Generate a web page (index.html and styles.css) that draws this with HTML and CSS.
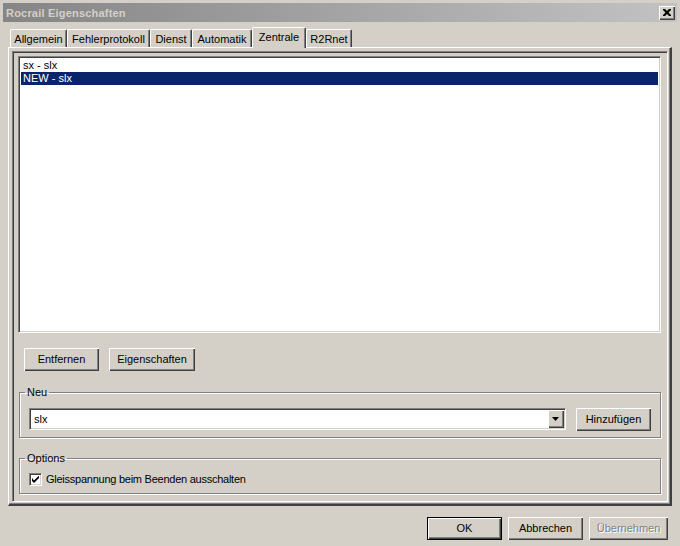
FILE: index.html
```html
<!DOCTYPE html>
<html>
<head>
<meta charset="utf-8">
<link rel="stylesheet" href="styles.css">
</head>
<body>
<div class="titlebar">
  <span class="title">Rocrail Eigenschaften</span>
  <span class="close"><svg width="8" height="7" viewBox="0 0 8 7"><path d="M0 0h2l2 2 2-2h2v1l-2.5 2.5 2.5 2.5v1h-2l-2-2-2 2h-2v-1l2.5-2.5-2.5-2.5z" fill="#000"/></svg></span>
</div>
<div class="tabs">
  <div class="tab t-allg">Allgemein</div>
  <div class="tab t-fehl">Fehlerprotokoll</div>
  <div class="tab t-dien">Dienst</div>
  <div class="tab t-auto">Automatik</div>
  <div class="tab t-zent active">Zentrale</div>
  <div class="tab t-r2r">R2Rnet</div>
</div>
<div class="panel">
  <div class="sunken">
    <div class="list">
      <div class="item">sx - slx</div>
      <div class="item sel">NEW - slx</div>
    </div>
    <div class="btnrow">
      <button class="btn b-entf">Entfernen</button>
      <button class="btn b-eig">Eigenschaften</button>
    </div>
    <fieldset class="group g-neu">
      <legend>Neu</legend>
      <div class="neurow">
        <div class="combo">
          <span class="combotext">slx</span>
          <span class="dropbtn"><svg width="7" height="4" viewBox="0 0 7 4"><path d="M0 0h7l-3.5 4z" fill="#000"/></svg></span>
        </div>
        <button class="btn b-add">Hinzufügen</button>
      </div>
    </fieldset>
    <fieldset class="group g-opt">
      <legend>Options</legend>
      <label class="check">
        <span class="box"><svg width="7" height="7" viewBox="0 0 7 7"><path d="M0 2v3l2 2 5-5v-2.5l-5 5z" fill="#000"/></svg></span>
        <span class="checklabel">Gleisspannung beim Beenden ausschalten</span>
      </label>
    </fieldset>
  </div>
</div>
<div class="footer">
  <button class="btn b-foot default">OK</button>
  <button class="btn b-foot">Abbrechen</button>
  <button class="btn b-foot b-wide disabled">Übernehmen</button>
</div>
</body>
</html>
```

FILE: styles.css
```css
html, body {
  margin: 0;
  padding: 0;
}
body {
  width: 680px;
  height: 546px;
  background: #d4d0c8;
  font-family: "Liberation Sans", Arial, sans-serif;
  font-size: 11px;
  color: #000;
  overflow: hidden;
}
.titlebar {
  margin: 3px 3px 0 3px;
  height: 19px;
  background: linear-gradient(to right, #858585, #c2c2c2);
  display: flex;
  align-items: center;
  justify-content: space-between;
  padding: 0 2px 0 3px;
}
.title {
  font-weight: bold;
  color: #d4d0c8;
  font-size: 11px;
  letter-spacing: 0.2px;
}
.close {
  width: 16px;
  height: 14px;
  box-sizing: border-box;
  background: #d4d0c8;
  box-shadow: inset 1px 1px #fff, inset -1px -1px #404040, inset -2px -2px #808080;
  display: flex;
  align-items: center;
  justify-content: center;
}
.close svg { display: block; margin-top: -1px; }

.tabs {
  display: flex;
  align-items: flex-end;
  margin-top: 5px;
  padding-left: 10px;
  height: 21px;
}
.tab {
  box-sizing: border-box;
  height: 18px;
  margin-bottom: 1px;
  border-top: 1px solid #fff;
  border-left: 1px solid #fff;
  border-right: 1px solid #404040;
  border-radius: 2px 2px 0 0;
  box-shadow: inset -1px 0 #808080;
  text-align: center;
  padding-top: 3px;
  line-height: 13px;
  white-space: nowrap;
}
.tab.active {
  height: 21px;
  margin-bottom: 0;
  padding-top: 3px;
  background: #d4d0c8;
  position: relative;
  z-index: 1;
}
.t-allg { width: 57px; }
.t-fehl { width: 83px; }
.t-dien { width: 42px; }
.t-auto { width: 60px; }
.t-zent { width: 54px; }
.t-r2r { width: 46px; }

.panel {
  margin: -1px 0 0 8px;
  width: 664px;
  height: 459px;
  box-sizing: border-box;
  border-top: 1px solid #fff;
  border-left: 1px solid #fff;
  border-right: 2px solid #404040;
  border-bottom: 2px solid #404040;
  box-shadow: inset -1px -1px #808080;
  padding: 3px 2px 2px 3px;
}
.sunken {
  height: 451px;
  box-sizing: border-box;
  border: 1px solid;
  border-color: #808080 #fff #fff #808080;
  box-shadow: inset 1px 1px #404040;
  padding: 1px;
  display: flex;
  flex-direction: column;
}
.list {
  margin: 3px 5px 0 4px;
  height: 277px;
  box-sizing: border-box;
  background: #fff;
  border: 1px solid;
  border-color: #808080 #fff #fff #808080;
  box-shadow: inset 1px 1px #404040, inset -1px -1px #d4d0c8;
  padding: 2px;
}
.item {
  height: 13px;
  line-height: 13px;
  padding-left: 2px;
  white-space: nowrap;
}
.item.sel {
  background: #0a246a;
  color: #fff;
}

.btn {
  font-family: "Liberation Sans", Arial, sans-serif;
  font-size: 11px;
  color: #000;
  background: #d4d0c8;
  border: none;
  margin: 0;
  padding: 0;
  height: 23px;
  box-sizing: border-box;
  box-shadow: inset 1px 1px #fff, inset -1px -1px #404040, inset -2px -2px #808080;
  text-align: center;
  line-height: 21px;
}
.btnrow {
  display: flex;
  gap: 10px;
  margin: 15px 0 0 10px;
}
.b-entf { width: 75px; }
.b-eig { width: 86px; }

.group {
  margin: 0;
  border: 1px solid #808080;
  box-shadow: inset 1px 1px #fff, 1px 1px #fff;
  min-width: 0;
}
.group legend {
  padding: 0 2px;
  margin-left: -4px;
  line-height: 13px;
  height: 13px;
}
.g-neu {
  margin: 15px 5px 0 5px;
  padding: 9px 9px 6px 9px;
}
.neurow {
  display: flex;
  gap: 10px;
  align-items: flex-start;
}
.combo {
  width: 537px;
  height: 22px;
  box-sizing: border-box;
  background: #fff;
  border: 1px solid;
  border-color: #808080 #fff #fff #808080;
  box-shadow: inset 1px 1px #404040, inset -1px -1px #d4d0c8;
  padding: 1px;
  display: flex;
  align-items: stretch;
}
.combotext {
  flex: 1;
  line-height: 18px;
  padding-left: 3px;
}
.dropbtn {
  width: 16px;
  box-sizing: border-box;
  background: #d4d0c8;
  box-shadow: inset 1px 1px #fff, inset -1px -1px #404040, inset -2px -2px #808080;
  display: flex;
  align-items: center;
  justify-content: center;
}
.dropbtn svg { display: block; margin-left: -1px; }
.b-add { width: 75px; }

.g-opt {
  margin: 14px 5px 0 5px;
  padding: 8px 9px 7px 9px;
}
.check {
  display: flex;
  align-items: center;
  gap: 4px;
  height: 13px;
  line-height: 13px;
}
.checklabel {
  letter-spacing: -0.25px;
}
.box {
  width: 13px;
  height: 13px;
  box-sizing: border-box;
  background: #fff;
  border: 1px solid;
  border-color: #808080 #fff #fff #808080;
  box-shadow: inset 1px 1px #404040, inset -1px -1px #d4d0c8;
  display: flex;
  align-items: center;
  justify-content: center;
}
.box svg { display: block; }

.footer {
  display: flex;
  justify-content: flex-end;
  gap: 6px;
  margin-top: 11px;
  padding-right: 12px;
}
.b-foot { width: 75px; }
.b-wide { width: 79px; }
.default {
  border: 1px solid #000;
  line-height: 21px;
  box-shadow: inset 1px 1px #fff, inset -1px -1px #404040, inset -2px -2px #808080;
}
.disabled {
  color: #808080;
  text-shadow: 1px 1px #fff;
}
```
